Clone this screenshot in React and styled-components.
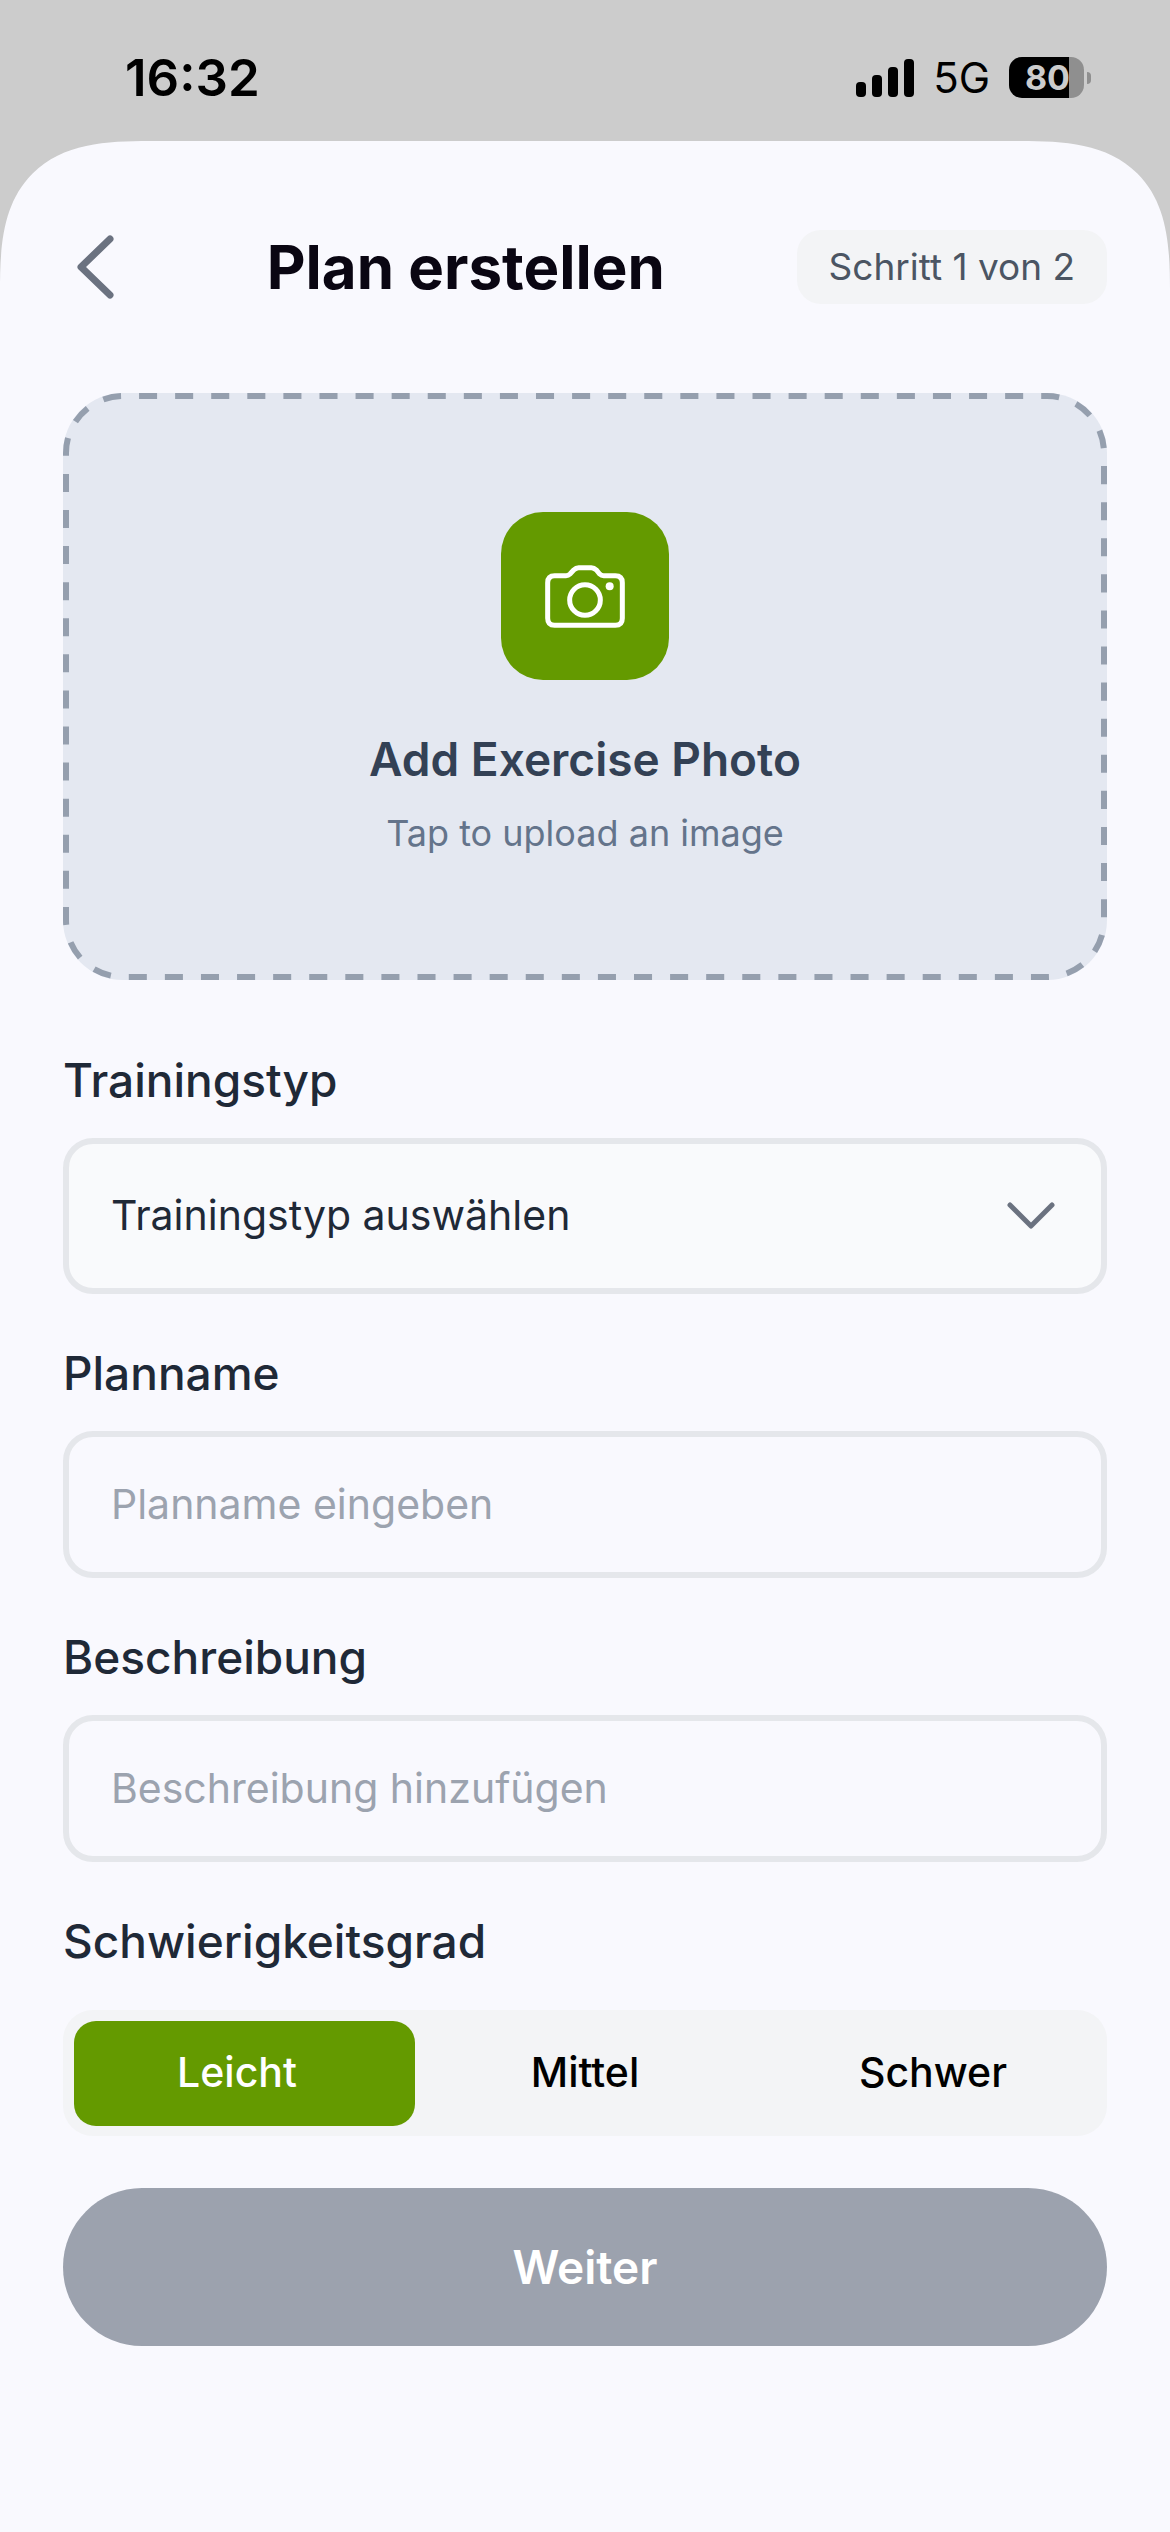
import React, { useState } from 'react';
import styled, { createGlobalStyle } from 'styled-components';

const levels = ['Leicht', 'Mittel', 'Schwer'];

const App = () => {
  const [level, setLevel] = useState(0);
  const [type, setType] = useState('');
  const [name, setName] = useState('');
  const [description, setDescription] = useState('');

  return (
    <Screen>
      <GlobalStyle />

      <StatusBar>
        <Time>16:32</Time>
        <StatusIcons>
          <SignalIcon />
          <Network>5G</Network>
          <Battery>
            <BatteryBody>80</BatteryBody>
            <BatteryTip />
          </Battery>
        </StatusIcons>
      </StatusBar>

      <Sheet>
        <Header>
          <BackButton type="button" aria-label="Zurück">
            <svg width="72" height="72" viewBox="0 0 72 72" fill="none">
              <path
                d="M47 8 L18 36 L47 64"
                stroke="#6b7280"
                strokeWidth="7"
                strokeLinecap="round"
                strokeLinejoin="round"
              />
            </svg>
          </BackButton>
          <Title>Plan erstellen</Title>
          <StepBadge>Schritt 1 von 2</StepBadge>
        </Header>

        <PhotoUpload type="button">
          <DashedOutline aria-hidden="true">
            <rect x="3" y="3" rx="57" pathLength="3132" />
          </DashedOutline>
          <PhotoIcon>
            <CameraIcon />
          </PhotoIcon>
          <PhotoTitle>Add Exercise Photo</PhotoTitle>
          <PhotoHint>Tap to upload an image</PhotoHint>
        </PhotoUpload>

        <Form onSubmit={(e) => e.preventDefault()}>
          <Field>
            <Label htmlFor="type">Trainingstyp</Label>
            <SelectWrapper>
              <Select id="type" value={type} onChange={(e) => setType(e.target.value)}>
                <option value="">Trainingstyp auswählen</option>
              </Select>
              <SelectArrow width="48" height="28" viewBox="0 0 48 28" fill="none">
                <path
                  d="M3 3 L24 24 L45 3"
                  stroke="#6b7280"
                  strokeWidth="5"
                  strokeLinecap="round"
                  strokeLinejoin="round"
                />
              </SelectArrow>
            </SelectWrapper>
          </Field>

          <Field>
            <Label htmlFor="name">Planname</Label>
            <Input
              id="name"
              placeholder="Planname eingeben"
              value={name}
              onChange={(e) => setName(e.target.value)}
            />
          </Field>

          <Field>
            <Label htmlFor="description">Beschreibung</Label>
            <Input
              id="description"
              placeholder="Beschreibung hinzufügen"
              value={description}
              onChange={(e) => setDescription(e.target.value)}
            />
          </Field>

          <LevelField>
            <Legend>Schwierigkeitsgrad</Legend>
            <Segments>
              <SegmentThumb $index={level} />
              {levels.map((item, i) => (
                <Segment key={item} $active={i === level}>
                  <SegmentInput
                    type="radio"
                    name="level"
                    checked={i === level}
                    onChange={() => setLevel(i)}
                  />
                  {item}
                </Segment>
              ))}
            </Segments>
          </LevelField>

          <SubmitButton type="submit">Weiter</SubmitButton>
        </Form>
      </Sheet>
    </Screen>
  );
};

const SignalIcon = () => (
  <svg width="58" height="38" viewBox="0 0 58 38" fill="#000">
    <rect x="0" y="23" width="10" height="15" rx="4" />
    <rect x="16" y="16" width="10" height="22" rx="4" />
    <rect x="32" y="8" width="10" height="30" rx="4" />
    <rect x="48" y="0" width="10" height="38" rx="4" />
  </svg>
);

const CameraIcon = () => (
  <svg width="80" height="63" viewBox="0 0 240 189" fill="none" stroke="#fff" strokeWidth="15">
    <path d="M29 32 H63 Q70 32 75 27 L86 15 Q93 8 101 8 H139 Q147 8 154 15 L164 27 Q169 32 176 32 H211 Q232 32 232 53 V160 Q232 181 211 181 H29 Q8 181 8 160 V53 Q8 32 29 32 Z" />
    <circle cx="120" cy="105" r="46" />
    <circle cx="194" cy="64" r="12" fill="#fff" stroke="none" />
  </svg>
);

const GlobalStyle = createGlobalStyle`
  * {
    box-sizing: border-box;
  }

  body {
    margin: 0;
    background: #f9f9fe;
    font-family: Inter, 'Liberation Sans', sans-serif;
  }

  button,
  input,
  select {
    font-family: inherit;
    margin: 0;
  }
`;

const Screen = styled.div`
  display: flex;
  flex-direction: column;
  min-height: 100vh;
  background: #cccccc;
`;

const StatusBar = styled.div`
  display: flex;
  justify-content: space-between;
  align-items: center;
  height: 141px;
  padding: 14px 79px 0 125px;
  color: #000;
`;

const Time = styled.span`
  font-size: 51px;
  font-weight: 600;
  line-height: 58px;
`;

const StatusIcons = styled.div`
  display: flex;
  align-items: center;
  gap: 19px;
`;

const Network = styled.span`
  font-size: 42px;
  line-height: 52px;
`;

const Battery = styled.div`
  display: flex;
  align-items: center;
  gap: 3px;
`;

const BatteryBody = styled.div`
  width: 75px;
  height: 41px;
  padding-left: 2px;
  border-radius: 13px;
  background: linear-gradient(to right, #000 80%, #8f8f8f 80%);
  color: #cccccc;
  font-size: 34px;
  font-weight: 700;
  line-height: 41px;
  text-align: center;
`;

const BatteryTip = styled.div`
  width: 4px;
  height: 12px;
  border-radius: 0 4px 4px 0;
  background: #8f8f8f;
`;

const Sheet = styled.main`
  flex: 1;
  padding: 89px 63px;
  background: #f9f9fe;
  border-radius: 116px 116px 0 0;

  @supports (corner-shape: superellipse(1.5)) {
    border-radius: 150px 150px 0 0;
    corner-shape: superellipse(1.5);
  }
`;

const Header = styled.header`
  display: flex;
  justify-content: space-between;
  align-items: center;
  margin-bottom: 89px;
`;

const BackButton = styled.button`
  display: flex;
  padding: 0;
  border: none;
  background: none;
  cursor: pointer;
`;

const Title = styled.h1`
  margin: 0;
  color: #0a0612;
  font-size: 60px;
  font-weight: 700;
  line-height: 74px;
`;

const StepBadge = styled.span`
  padding: 15px 32px;
  border-radius: 24px;
  background: #f3f4f6;
  color: #4b5563;
  font-size: 37px;
  line-height: 44px;
`;

const PhotoUpload = styled.button`
  position: relative;
  display: flex;
  flex-direction: column;
  align-items: center;
  width: 100%;
  padding: 119px 0 125px;
  border: none;
  border-radius: 60px;
  background: #e4e8f1;
  cursor: pointer;
`;

const DashedOutline = styled.svg`
  position: absolute;
  inset: 0;
  width: 100%;
  height: 100%;

  rect {
    width: calc(100% - 6px);
    height: calc(100% - 6px);
    fill: none;
    stroke: #959fae;
    stroke-width: 6px;
    stroke-dasharray: 18 18;
    stroke-dashoffset: 20;
  }
`;

const PhotoIcon = styled.span`
  display: flex;
  justify-content: center;
  align-items: center;
  width: 168px;
  height: 168px;
  margin-bottom: 50px;
  border-radius: 42px;
  background: #649a00;
`;

const PhotoTitle = styled.span`
  margin-bottom: 23px;
  color: #334155;
  font-size: 46px;
  font-weight: 600;
  line-height: 58px;
`;

const PhotoHint = styled.span`
  color: #64748b;
  font-size: 36px;
  line-height: 44px;
`;

const Form = styled.form`
  display: flex;
  flex-direction: column;
  gap: 50px;
  margin-top: 71px;
`;

const Field = styled.div`
  display: flex;
  flex-direction: column;
  gap: 29px;
`;

const Label = styled.label`
  color: #1f2937;
  font-size: 46px;
  font-weight: 500;
  line-height: 58px;
`;

const SelectWrapper = styled.div`
  position: relative;
`;

const Select = styled.select`
  appearance: none;
  width: 100%;
  height: 156px;
  padding: 0 120px 2px 42px;
  border: 6px solid #e5e7eb;
  border-radius: 30px;
  background: #f9fafc;
  color: #1f2937;
  font-size: 41px;
`;

const SelectArrow = styled.svg`
  position: absolute;
  top: 64px;
  right: 52px;
  pointer-events: none;
`;

const Input = styled.input`
  width: 100%;
  height: 147px;
  padding: 0 42px 2px;
  border: 6px solid #e5e7eb;
  border-radius: 30px;
  background: transparent;
  color: #1f2937;
  font-size: 41px;

  &::placeholder {
    color: #9ca3af;
    opacity: 1;
  }
`;

const LevelField = styled.fieldset`
  min-width: 0;
  margin: 0;
  padding: 0;
  border: none;
`;

const Legend = styled.legend`
  margin-bottom: 40px;
  padding: 0;
  color: #1f2937;
  font-size: 46px;
  font-weight: 500;
  line-height: 58px;
`;

const Segments = styled.div`
  position: relative;
  display: grid;
  grid-template-columns: repeat(3, 1fr);
  height: 126px;
  border-radius: 30px;
  background: #f3f4f6;
`;

/* slides behind the labels to the selected level */
const SegmentThumb = styled.span`
  position: absolute;
  top: 11px;
  bottom: 10px;
  left: 11px;
  width: calc((100% - 22px) / 3);
  border-radius: 22px;
  background: #649a00;
  transform: translateX(${({ $index }) => $index * 100}%);
  transition: transform 0.2s ease;
`;

const Segment = styled.label`
  position: relative;
  display: flex;
  justify-content: center;
  align-items: center;
  padding-bottom: 2px;
  color: ${({ $active }) => ($active ? '#fff' : '#000')};
  font-size: 41px;
  font-weight: 500;
  cursor: pointer;
`;

const SegmentInput = styled.input`
  position: absolute;
  opacity: 0;
`;

const SubmitButton = styled.button`
  height: 158px;
  margin-top: 2px;
  border: none;
  border-radius: 79px;
  background: #9ca2ae;
  color: #fff;
  font-size: 46px;
  font-weight: 600;
  cursor: pointer;
`;

export default App;
